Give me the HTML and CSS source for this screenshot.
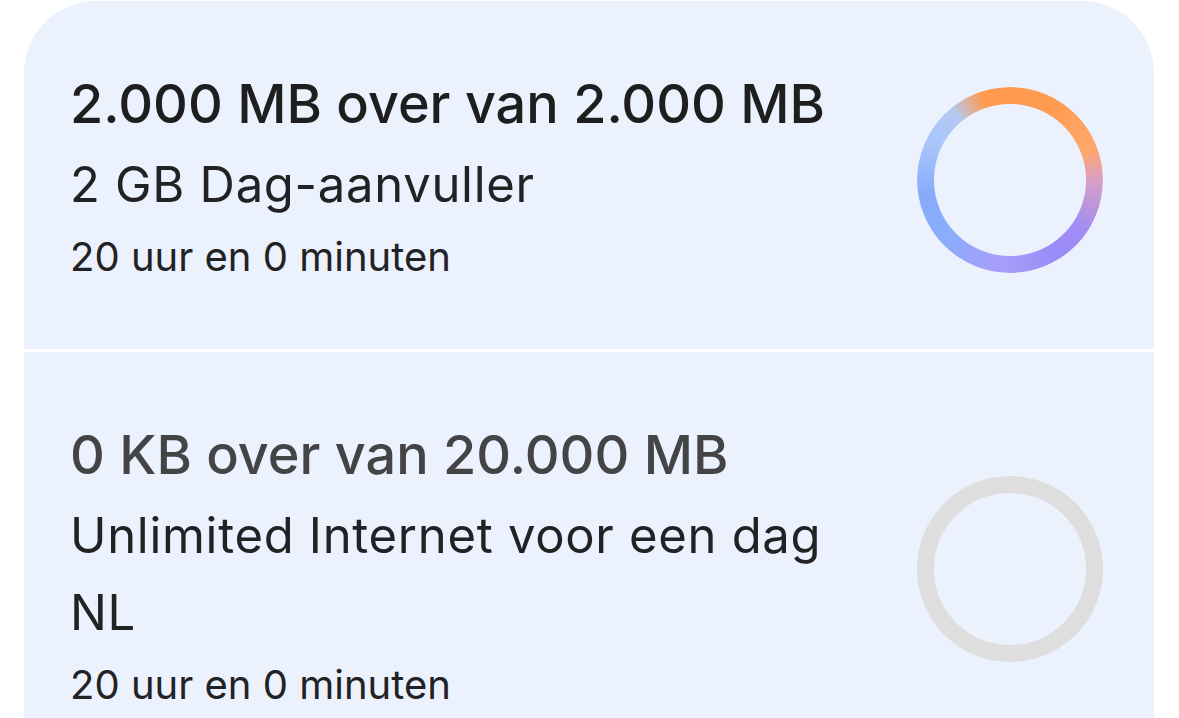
FILE: index.html
```html
<!DOCTYPE html>
<html lang="nl">
<head>
<meta charset="utf-8">
<title>Bundels</title>
<link rel="stylesheet" href="styles.css">
</head>
<body>
<div class="card">
  <div class="item">
    <div class="info">
      <div class="title">2.000 MB over van 2.000 MB</div>
      <div class="name">2 GB Dag-aanvuller</div>
      <div class="time">20 uur en 0 minuten</div>
    </div>
    <div class="ring ring-active"></div>
  </div>
  <div class="item item-empty">
    <div class="info">
      <div class="title">0 KB over van 20.000 MB</div>
      <div class="name">Unlimited Internet voor een dag NL</div>
      <div class="time">20 uur en 0 minuten</div>
    </div>
    <div class="ring ring-empty"></div>
  </div>
</div>
</body>
</html>
```

FILE: styles.css
```css
html, body {
  margin: 0;
  padding: 0;
  background: #ffffff;
  overflow: hidden;
}

body {
  font-family: Inter, "Noto Sans", sans-serif;
  color: #1f1f1f;
}

.card {
  margin: 1px 25px 0 24px;
  background: #ebf1fd;
  border-radius: 72px 72px 0 0;
  overflow: hidden;
}

.item {
  display: flex;
  align-items: center;
  gap: 50px;
  padding: 73px 51px 64px 46px;
}

.item + .item {
  border-top: 3px solid #ffffff;
}

.info {
  flex: 1;
  min-width: 0;
}

.title {
  font-size: 54px;
  line-height: 60px;
  font-weight: 500;
  letter-spacing: 0px;
  color: #1e1e1f;
  margin-bottom: 12px;
}

.item-empty .title {
  color: #444446;
}

.name {
  font-size: 49px;
  line-height: 77px;
  font-weight: 400;
  letter-spacing: 0.7px;
  color: #222224;
}

.time {
  font-size: 40px;
  line-height: 56px;
  font-weight: 400;
  color: #222224;
  margin-top: 6px;
}

.ring {
  flex: none;
  width: 186px;
  height: 186px;
  border-radius: 50%;
  box-sizing: border-box;
}

.ring-active {
  background: conic-gradient(from -40deg,
    #b3c9f4 0deg,
    #ff9a4e 22deg,
    #ff9b50 70deg,
    #ffa86c 110deg,
    #d89fc6 130deg,
    #a08cf4 165deg,
    #9b8cf8 190deg,
    #a89df9 225deg,
    #8aaefb 270deg,
    #86abfb 300deg,
    #a9c5fa 335deg,
    #b3c9f4 360deg);
  -webkit-mask: radial-gradient(circle closest-side, transparent 75.5px, #000 76.5px);
  mask: radial-gradient(circle closest-side, transparent 75.5px, #000 76.5px);
}

.ring-empty {
  border: 17px solid #dedede;
}
```
